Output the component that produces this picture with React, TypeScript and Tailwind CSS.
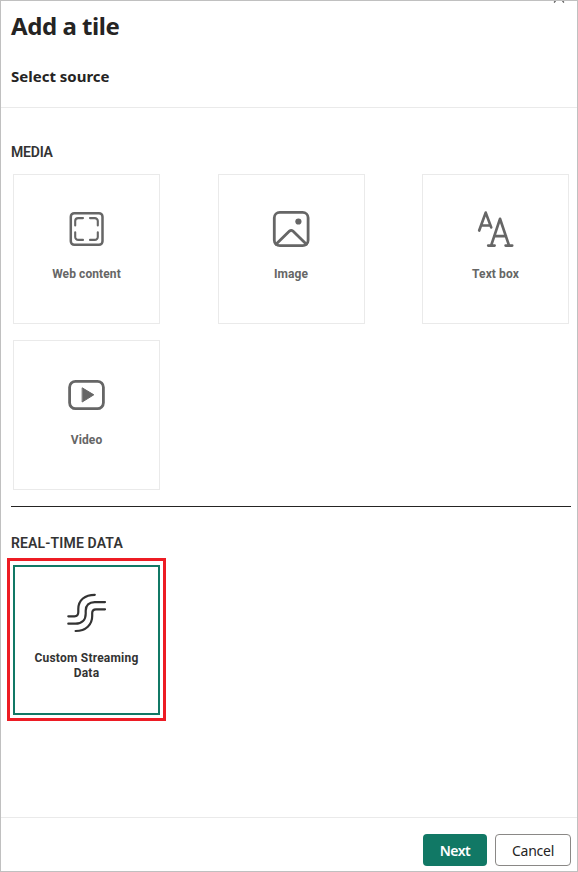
import type { ReactNode } from "react";

const din = "font-['Roboto','Liberation_Sans',sans-serif]";

function Icon({ children, weight = 2.8 }: { children: ReactNode; weight?: number }) {
  return (
    <svg width="41" height="40" viewBox="0 0 41 40" fill="none" stroke="currentColor" strokeWidth={weight} strokeLinecap="round" strokeLinejoin="round" className="block shrink-0">
      {children}
    </svg>
  );
}

function Tile({ label, children }: { label: string; children: ReactNode }) {
  return (
    <button className="flex h-[150px] w-[147px] flex-col items-center border border-[#eaeaea] pt-[34px] text-[#666]">
      {children}
      <span className={`${din} mt-[18px] text-[12px] leading-[15px] font-bold tracking-[0.1px]`}>{label}</span>
    </button>
  );
}

export default function App() {
  return (
    <div className="flex h-[872px] w-[578px] flex-col overflow-hidden border border-[#c0c0c0] bg-white font-['Noto_Sans','Open_Sans',sans-serif] text-[#252423]">
      <header className="relative h-[107px] shrink-0 border-b border-[#eaeaea] pl-[10px]">
        <svg width="12" height="3" viewBox="0 0 12 3" className="absolute top-0 right-[12px]" fill="none" stroke="#555" strokeWidth="1.2">
          <path d="M1 1.5 2.5 0M11 1.5 9.5 0" />
        </svg>
        <h1 className="pt-[9px] text-[24px] leading-8 font-bold tracking-[-0.45px]">Add a tile</h1>
        <h2 className="pt-[24px] text-[15px] leading-5 font-bold">Select source</h2>
      </header>

      <main className="flex-1 pr-[6px] pl-[10px]">
        <h3 className={`${din} pt-[35px] text-[14px] leading-[18px] font-semibold tracking-[-0.2px] text-[#333]`}>MEDIA</h3>
        <div className="mt-[13px] ml-[2px] grid w-[556px] grid-cols-[147px_147px_147px] justify-between gap-y-4">
          <Tile label="Web content">
            <Icon weight={2.5}>
              <rect x="4.8" y="4.2" width="31.7" height="31.6" rx="3.5" />
              <path strokeWidth="2.1" d="M17 9.1h-4.8a3 3 0 0 0-3 3v4.4M24 9.1h4.8a3 3 0 0 1 3 3v4.4M9.2 23.3v4.6a3 3 0 0 0 3 3H17M31.8 23.3v4.6a3 3 0 0 1-3 3H24" />
            </Icon>
          </Tile>
          <Tile label="Image">
            <Icon>
              <rect x="3.3" y="3.3" width="33.8" height="33.4" rx="5.5" />
              <path d="m5 35.3 13.5-13.2q1.7-1.5 3.4 0l13.5 13.2" />
              <circle cx="27.4" cy="12.5" r="3.1" fill="currentColor" stroke="none" />
            </Icon>
          </Tile>
          <Tile label="Text box">
            <Icon weight={2.7}>
              <path d="M4.2 21.5 10.7 3.6 16.2 18.4M6.3 16.5H15.5" />
              <path d="M16.2 36.4 25 9.8l9 26.6M19.2 27.2h11.8M13.2 36.6h6.4M30.6 36.6h6.6" />
            </Icon>
          </Tile>
          <Tile label="Video">
            <Icon>
              <rect x="3.6" y="6.3" width="33.8" height="27.4" rx="6" />
              <path d="m16.5 13 11.3 6.8-11.3 7Z" fill="currentColor" strokeWidth="1" />
            </Icon>
          </Tile>
        </div>

        <hr className="mt-4 w-[560px] border-[#252423]" />

        <h3 className={`${din} pt-[27px] text-[14px] leading-[18px] font-semibold tracking-[0.15px] text-[#333]`}>REAL-TIME DATA</h3>
        <div className="mt-[6px] -ml-1 h-[163px] w-[159px] border-3 border-[#ed1c24] pt-1 pl-[3px]">
          <button className="flex h-[150px] w-[147px] flex-col items-center border-2 border-[#117865] pt-[26px] text-[#333]">
            <Icon weight={2.2}>
              <path d="M2.3 23.3h6.2c3 0 3.8-1.5 3.8-4.3v-3C12.3 7 19 1.8 28.8 1.8" />
              <path d="M2.3 30.7h7.2c6.5 0 10.2-4 10.2-10v-3c0-5.4 3.4-8.6 9-8.6H39" />
              <path d="M9.6 38c10.4 0 16.6-6.5 16.6-15v-3c0-2.4 1.4-3.7 3.8-3.7h9" />
            </Icon>
            <span className={`${din} mt-[18px] w-[116px] text-center text-[12px] leading-[15px] font-bold tracking-[0.22px]`}>Custom Streaming Data</span>
          </button>
        </div>
      </main>

      <footer className="flex h-[54px] shrink-0 justify-end gap-2 border-t border-[#eaeaea] pt-4 pr-[6px]">
        <button className="h-8 w-16 rounded-[4px] bg-[#117865] pt-px text-[14px] leading-8 font-semibold tracking-[-0.5px] text-white">Next</button>
        <button className="flex h-8 w-[76px] items-center justify-center rounded-[4px] border border-[#8a8886] pt-px text-[14px] tracking-[-0.25px]">Cancel</button>
      </footer>
    </div>
  );
}
